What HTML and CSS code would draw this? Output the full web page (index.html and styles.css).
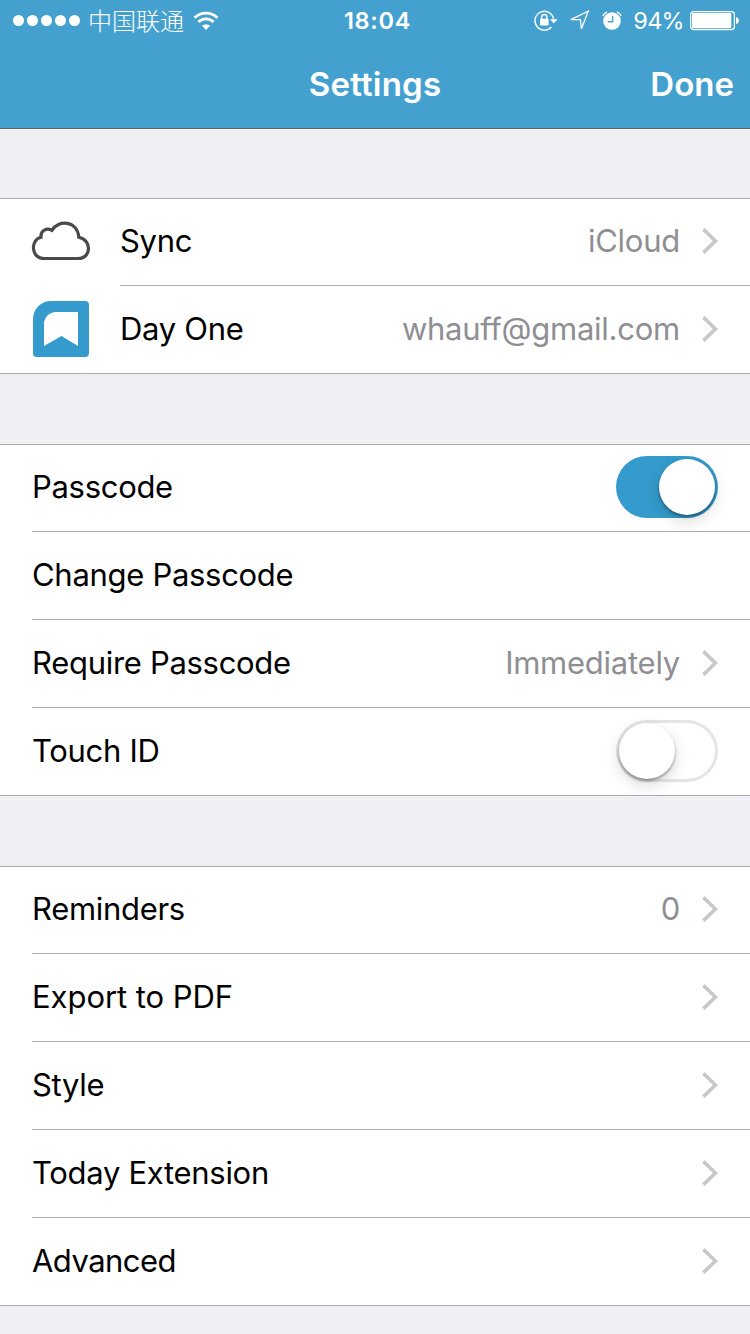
FILE: index.html
```html
<!DOCTYPE html>
<html lang="en">
<head>
<meta charset="utf-8">
<title>Settings</title>
<link rel="stylesheet" href="styles.css">
</head>
<body>
<svg class="defs" width="0" height="0" aria-hidden="true">
  <symbol id="chevron" viewBox="0 0 16 26"><path d="M1.4 1.4 13.4 13 1.4 24.6" fill="none" stroke="#c7c7cc" stroke-width="3.6"/></symbol>
</svg>
<header class="header">
  <div class="status">
    <div class="status-left">
      <span class="signal"><i></i><i></i><i></i><i></i><i></i></span>
      <span class="carrier">中国联通</span>
      <svg class="wifi" width="26" height="20" viewBox="0 0 26 20">
        <g fill="none" stroke="#fff" stroke-width="2.8">
          <path d="M1.5 6.8a16.3 16.3 0 0 1 23 0"/>
          <path d="M5.4 11.1a10.8 10.8 0 0 1 15.2 0"/>
        </g>
        <path d="M9 14.8a6 6 0 0 1 8 0L13 19z" fill="#fff"/>
      </svg>
    </div>
    <span class="clock">18:04</span>
    <div class="status-right">
      <svg class="lock" width="24" height="22" viewBox="0 0 24 22">
        <path d="M17.4 17A9.4 9.4 0 1 1 19.6 8.8" fill="none" stroke="#fff" stroke-width="1.4"/>
        <path d="M16 9.2h7.6l-3.8 4.4z" fill="#fff"/>
        <rect x="6" y="8.8" width="8.6" height="6.6" rx=".8" fill="#fff"/>
        <path d="M7.7 9.2V7a2.6 2.6 0 0 1 5.2 0v2.2" fill="none" stroke="#fff" stroke-width="1.5"/>
      </svg>
      <svg class="arrow" width="21" height="21" viewBox="0 0 21 21">
        <path d="M1.8 9.6 19.2 1.2 12.4 19 11.4 9.6z" fill="none" stroke="#fff" stroke-width="1.3"/>
      </svg>
      <svg class="alarm" width="20" height="20" viewBox="0 0 20 20">
        <circle cx="10" cy="10" r="8.8" fill="#fff"/>
        <path d="M.8 5A7 7 0 0 1 5.2.8M14.8.8A7 7 0 0 1 19.200 5" fill="none" stroke="#fff" stroke-width="1.4"/>
        <path d="M10.600 4.800v6H5.800" fill="none" stroke="#44a1cf" stroke-width="1.4"/>
      </svg>
      <span class="percent">94%</span>
      <svg class="battery" width="50" height="20" viewBox="0 0 50 20">
        <rect x=".6" y=".6" width="43.8" height="18" rx="3" fill="none" stroke="#fff" stroke-width="1.2"/>
        <rect x="2" y="2" width="39.3" height="15.2" rx="1" fill="#fff"/>
        <path d="M46 6c4 1 4 6 0 7z" fill="#fff"/>
      </svg>
    </div>
  </div>
  <nav class="navbar">
    <h1 class="title">Settings</h1>
    <span class="done">Done</span>
  </nav>
</header>
<main>
  <section class="group with-icons">
    <div class="row">
      <svg class="icon cloud" width="60" height="40" viewBox="0 0 60 40">
        <path d="M13 37.5C0 37.5-1 19 10 16.3 9.300 9 16 6.600 20.900 9.400 27-1.600 46.500-.6 47.800 16.200 61.500 19 60 37.500 47.500 37.500z" fill="none" stroke="#4a4a4a" stroke-width="3.2"/>
      </svg>
      <div class="body"><span class="label">Sync</span><span class="value">iCloud</span><svg class="chev"><use href="#chevron"/></svg></div>
    </div>
    <div class="row">
      <svg class="icon dayone" width="60" height="56" viewBox="0 0 60 56">
        <path d="M20 0h34a4 4 0 0 1 4 4v48a4 4 0 0 1-4 4H6a4 4 0 0 1-4-4V18A18 18 0 0 1 20 0z" fill="#349bcc"/>
        <path d="M25 11h22v34L30.500 35 13 45V23a12 12 0 0 1 12-12z" fill="#fff"/>
      </svg>
      <div class="body"><span class="label">Day One</span><span class="value">whauff@gmail.com</span><svg class="chev"><use href="#chevron"/></svg></div>
    </div>
  </section>
  <section class="group">
    <div class="row"><div class="body"><span class="label">Passcode</span><span class="switch on"><i></i></span></div></div>
    <div class="row"><div class="body"><span class="label">Change Passcode</span></div></div>
    <div class="row"><div class="body"><span class="label">Require Passcode</span><span class="value">Immediately</span><svg class="chev"><use href="#chevron"/></svg></div></div>
    <div class="row"><div class="body"><span class="label">Touch ID</span><span class="switch"><i></i></span></div></div>
  </section>
  <section class="group">
    <div class="row"><div class="body"><span class="label">Reminders</span><span class="value">0</span><svg class="chev"><use href="#chevron"/></svg></div></div>
    <div class="row"><div class="body"><span class="label loose">Export to PDF</span><svg class="chev"><use href="#chevron"/></svg></div></div>
    <div class="row"><div class="body"><span class="label">Style</span><svg class="chev"><use href="#chevron"/></svg></div></div>
    <div class="row"><div class="body"><span class="label">Today Extension</span><svg class="chev"><use href="#chevron"/></svg></div></div>
    <div class="row"><div class="body"><span class="label tight">Advanced</span><svg class="chev"><use href="#chevron"/></svg></div></div>
  </section>
</main>
</body>
</html>
```
FILE: styles.css
```css
* { box-sizing: border-box; }
html, body { margin: 0; height: 1334px; overflow: hidden; }
body {
  width: 750px;
  background: #efeff4;
  color: #000;
  font-family: Inter, "Noto Sans CJK SC", sans-serif;
}
svg { display: block; flex: none; }
.defs { position: absolute; }
.header {
  height: 129px;
  background: #44a1cf;
  border-bottom: 1px solid #5e6468;
  color: #fff;
}
.status {
  display: grid;
  grid-template-columns: 1fr auto 1fr;
  align-items: center;
  height: 40px;
}
.status-left, .status-right { display: flex; align-items: center; height: 40px; }
.status-left { padding-left: 13px; }
.status-right { justify-content: flex-end; padding-right: 10px; }
.signal { display: flex; gap: 3px; }
.signal i { width: 11px; height: 11px; border-radius: 50%; background: #fff; }
.carrier {
  margin-left: 8px;
  padding-bottom: 3px;
  font: 300 24px/37px "Noto Sans CJK SC", sans-serif;
}
.wifi { margin-left: 9px; }
.clock { font-size: 23.5px; font-weight: 600; letter-spacing: 0.7px; line-height: 40px; padding: 1px 0 0 5px; }
.arrow { margin-left: 11px; }
.alarm { margin-left: 12px; }
.percent { margin-left: 11px; font-size: 23.5px; font-weight: 400; letter-spacing: -0.7px; line-height: 40px; padding-top: 1px; }
.battery { margin-left: 6px; }
.navbar {
  display: grid;
  grid-template-columns: 1fr auto 1fr;
  align-items: center;
  height: 88px;
}
.title { grid-column: 2; margin: 0; font-size: 33px; font-weight: 600; letter-spacing: 0.2px; }
.done { justify-self: end; padding-right: 16px; font-size: 33px; font-weight: 600; }
.group {
  margin-top: 70px;
  border-top: 1px solid #adadb0;
  border-bottom: 1px solid #adadb0;
  background: #fff;
}
.with-icons { margin-top: 69px; }
.row { display: flex; align-items: center; height: 88px; padding-left: 32px; }
.row:first-child, .row:last-child { height: 87px; }
.icon { width: 60px; margin-left: -1px; margin-right: 29px; }
.cloud { margin-bottom: 4px; }
.dayone { margin-bottom: 2px; }
.body {
  flex: 1;
  display: flex;
  align-items: center;
  align-self: stretch;
  padding: 0 32px 1px 0;
  border-bottom: 1px solid #adadb0;
}
.row:first-child .body { padding-bottom: 2px; }
.row:last-child .body { border-bottom: 0; }
.label, .value { font-size: 31px; line-height: 40px; letter-spacing: -0.3px; white-space: nowrap; }
.loose { letter-spacing: -0.05px; }
.tight { letter-spacing: -0.55px; }
.value { margin-left: auto; color: #8e8e93; letter-spacing: -0.25px; }
.chev { width: 16px; height: 26px; margin-left: 22px; }
.label + .chev { margin-left: auto; }
.switch {
  display: flex;
  width: 102px;
  height: 62px;
  margin-left: auto;
  padding: 3px;
  border-radius: 31px;
  box-shadow: inset 0 0 0 3px #e5e5e5;
}
.switch i {
  width: 56px;
  height: 56px;
  border-radius: 50%;
  background: #fff;
  box-shadow: 0 2px 3px rgba(0,0,0,.35), 0 6px 16px rgba(0,0,0,.15);
}
.switch.on { justify-content: flex-end; background: #349bcc; box-shadow: none; }
```
